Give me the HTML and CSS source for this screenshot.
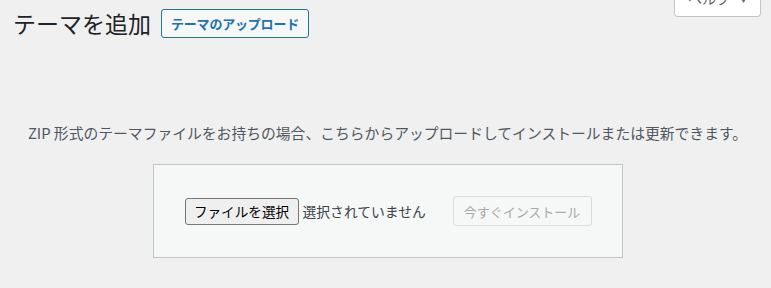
FILE: index.html
```html
<!DOCTYPE html>
<html lang="ja">
<head>
<meta charset="utf-8">
<title>テーマを追加</title>
<link rel="stylesheet" href="styles.css">
</head>
<body>
<div class="help-tab"><span class="help-label">ヘルプ</span><span class="help-arrow">▼</span></div>
<div class="wrap">
  <div class="heading">
    <h1 class="title">テーマを追加</h1>
    <a class="upload-btn">テーマのアップロード</a>
  </div>
  <p class="install-help">ZIP 形式のテーマファイルをお持ちの場合、こちらからアップロードしてインストールまたは更新できます。</p>
  <div class="form-row">
    <form class="upload-form">
      <div class="file-group">
        <span class="file-btn">ファイルを選択</span>
        <span class="file-status">選択されていません</span>
      </div>
      <span class="install-btn">今すぐインストール</span>
    </form>
  </div>
</div>
</body>
</html>
```
FILE: styles.css
```css
html, body {
  margin: 0;
  padding: 0;
  background: #f0f0f1;
  font-family: "Noto Sans CJK JP", "Noto Sans", sans-serif;
  color: #1d2327;
}
body {
  position: relative;
  height: 288px;
  overflow: hidden;
}
.help-tab {
  position: absolute;
  top: -13px;
  right: 10px;
  width: 85px;
  height: 29px;
  background: #fff;
  border: 1px solid #c3c4c7;
  border-top: none;
  border-radius: 0 0 4px 4px;
  color: #646970;
  font-size: 14px;
  display: flex;
  align-items: flex-start;
  justify-content: center;
  gap: 8px;
  line-height: 16px;
  padding-top: 3px;
  box-sizing: border-box;
  height: 30px;
  width: 87px;
}
.help-label { padding-left: 2px; }
.help-arrow { font-size: 11px; }
.wrap {
  padding-left: 4px;
}
.heading {
  display: flex;
  align-items: center;
  margin-top: 9px;
  padding-left: 9px;
  height: 29px;
}
.title {
  margin: 0;
  font-size: 23px;
  font-weight: 400;
  line-height: 29px;
  color: #1d2327;
}
.upload-btn {
  margin-left: 10px;
  box-sizing: border-box;
  height: 29px;
  padding: 0 9px;
  border: 1px solid #2271b1;
  border-radius: 3px;
  background: #f6f7f7;
  color: #2271b1;
  font-size: 13px;
  font-weight: 600;
  line-height: 27px;
  letter-spacing: -0.2px;
}
.install-help {
  margin: 84px 0 0;
  text-align: center;
  color: #50575e;
  font-size: 14.8px;
  line-height: 22px;
}
.form-row {
  display: flex;
  justify-content: center;
  margin-top: 20px;
}
.upload-form {
  margin: 0;
  width: 408px;
  padding: 31px 30px;
  background: #f6f7f7;
  border: 1px solid #c3c4c7;
  display: flex;
  justify-content: space-between;
  align-items: center;
}
.file-group {
  display: flex;
  align-items: center;
  gap: 4px;
}
.file-btn {
  box-sizing: border-box;
  height: 27px;
  width: 114px;
  margin-left: 1px;
  display: flex;
  align-items: center;
  justify-content: center;
  background: #efefef;
  border: 1px solid #767676;
  border-radius: 3px;
  color: #000;
  font-size: 13.6px;
}
.file-status {
  color: #3c434a;
  font-size: 13.8px;
}
.install-btn {
  box-sizing: border-box;
  height: 30px;
  width: 139px;
  display: flex;
  align-items: center;
  justify-content: center;
  border: 1px solid #dcdcde;
  border-radius: 3px;
  background: #f6f7f7;
  color: #a7aaad;
  font-size: 13px;
}
```
